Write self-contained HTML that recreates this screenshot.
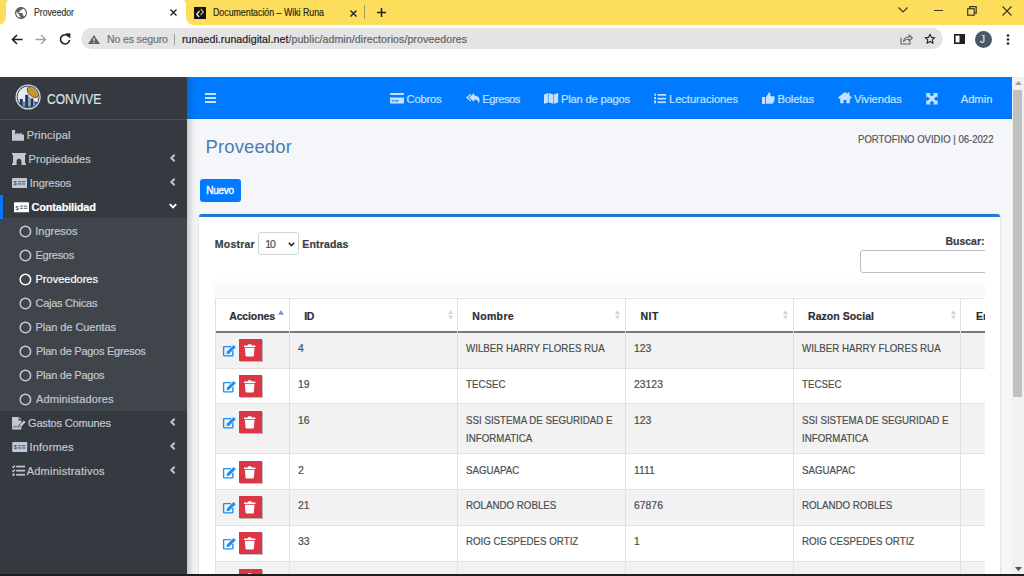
<!DOCTYPE html>
<html><head><meta charset="utf-8">
<style>
*{box-sizing:border-box;margin:0;padding:0}
html,body{width:1024px;height:576px;overflow:hidden;background:#fff;font-family:"Liberation Sans",sans-serif}
.a{position:absolute}
.t{position:absolute;white-space:nowrap;line-height:1;-webkit-text-stroke:0.2px currentColor}
svg{position:absolute;overflow:visible}
/* chrome */
#tabs{left:0;top:0;width:1024px;height:25px;background:#fddd5c}
#toolbar{left:0;top:25px;width:1024px;height:52px;background:#fff}
#omni{left:81px;top:28px;width:862px;height:21px;border-radius:11px;background:#e4e4e4}
/* page */
#sidebar{left:0;top:77px;width:187px;height:499px;background:#343a40}
#navbar{left:187px;top:77px;width:825px;height:42px;background:#007bff}
#content{left:187px;top:119px;width:825px;height:457px;background:#f4f6f9}
#scroll{left:1012px;top:77px;width:12px;height:499px;background:#f1f1f1}
.nav{color:#c2c7d0;font-size:11px}
.nb{color:#c4e0ff;font-size:11px}
</style></head>
<body>
<!-- ============ CHROME ============ -->
<div id="tabs" class="a"></div>
<div class="a" style="left:6px;top:-2px;width:180px;height:28px;background:#fff;border-radius:7px 7px 0 0"></div>
<div class="a" style="left:0;top:17px;width:6px;height:9px;background:#fff"></div>
<div class="a" style="left:-2px;top:15px;width:8px;height:10px;background:#fddd5c;border-radius:0 0 8px 0"></div>
<div class="a" style="left:186px;top:17px;width:6px;height:9px;background:#fff"></div>
<div class="a" style="left:186px;top:15px;width:8px;height:10px;background:#fddd5c;border-radius:0 0 0 8px"></div>
<!-- globe -->
<svg style="left:15px;top:6.5px" width="12" height="12" viewBox="2 2 20 20"><circle cx="12" cy="12" r="10" fill="#fff"/><path d="M12 2C6.48 2 2 6.48 2 12s4.48 10 10 10 10-4.48 10-10S17.52 2 12 2zm-1 17.930c-3.950-.49-7-3.850-7-7.930 0-.62.08-1.210.21-1.790L9 15v1c0 1.100.9 2 2 2v1.930zm6.900-2.540c-.26-.81-1-1.390-1.900-1.390h-1v-3c0-.55-.45-1-1-1H8v-2h2c.55 0 1-.45 1-1V7h2c1.100 0 2-.9 2-2v-.41c2.930 1.190 5 4.060 5 7.410 0 2.080-.8 3.970-2.100 5.390z" fill="#5f6368"/></svg>
<div class="t" style="transform:scaleX(0.8508);transform-origin:0 0;left:33.5px;top:8.2px;font-size:10.2px;color:#35373a">Proveedor</div>
<svg style="left:170px;top:9px" width="7" height="7" viewBox="0 0 7 7"><path d="M0.5 0.5L6.5 6.5M6.5 0.5L0.5 6.5" stroke="#202124" stroke-width="1.4"/></svg>
<!-- tab2 -->
<div class="a" style="left:194px;top:7px;width:12px;height:12px;background:#111"></div>
<svg style="left:194px;top:7px" width="12" height="12" viewBox="0 0 12 12"><path d="M5.5 4 L2.8 7.2 L5.2 10" stroke="#eee" stroke-width="1.3" fill="none"/><path d="M6.8 2 L9.2 5 L6.5 8" stroke="#c9a36a" stroke-width="1.3" fill="none"/></svg>
<div class="t" style="transform:scaleX(0.8635);transform-origin:0 0;left:212.5px;top:8.2px;font-size:10.2px;color:#2e2a18">Documentación – Wiki Runa</div>
<svg style="left:350px;top:10px" width="7" height="7" viewBox="0 0 7 7"><path d="M0.5 0.5L6.5 6.5M6.5 0.5L0.5 6.5" stroke="#202124" stroke-width="1.4"/></svg>
<div class="a" style="left:364px;top:5px;width:1px;height:14px;background:#a89a5a"></div>
<svg style="left:377px;top:8px" width="9" height="9" viewBox="0 0 9 9"><path d="M4.5 0V9M0 4.5H9" stroke="#202124" stroke-width="1.5"/></svg>
<!-- window controls -->
<svg style="left:898px;top:7px" width="10" height="6" viewBox="0 0 10 6"><path d="M0.5 0.5L5 5L9.5 0.5" stroke="#3c3a1e" stroke-width="1.2" fill="none"/></svg>
<div class="a" style="left:934px;top:10px;width:9px;height:1.3px;background:#3c3a1e"></div>
<svg style="left:967px;top:6px" width="10" height="10" viewBox="0 0 10 10"><rect x="0.7" y="2.7" width="6.5" height="6.5" fill="none" stroke="#3c3a1e" stroke-width="1.2"/><path d="M2.7 2.7V0.7H9.2V7.2H7.2" fill="none" stroke="#3c3a1e" stroke-width="1.2"/></svg>
<svg style="left:1002px;top:6px" width="10" height="10" viewBox="0 0 10 10"><path d="M0.5 0.5L9.5 9.5M9.5 0.5L0.5 9.5" stroke="#3c3a1e" stroke-width="1.2"/></svg>
<div id="toolbar" class="a" style="top:26px;height:51px"></div>
<div class="a" style="left:0;top:25px;width:6px;height:1px;background:#fff"></div>
<!-- nav buttons -->
<svg style="left:11px;top:34px" width="12" height="11" viewBox="0 0 12 11"><path d="M11.5 5.5H1.5M6 1L1.5 5.5L6 10" stroke="#202124" stroke-width="1.6" fill="none"/></svg>
<svg style="left:35px;top:34px" width="12" height="11" viewBox="0 0 12 11"><path d="M0.5 5.5H10.5M6 1L10.5 5.5L6 10" stroke="#a0a0a0" stroke-width="1.4" fill="none"/></svg>
<svg style="left:59px;top:33px" width="12" height="12" viewBox="0 0 12 12"><path d="M9.6 3.4A4.6 4.6 0 1 0 10.6 7" stroke="#202124" stroke-width="1.6" fill="none"/><path d="M7 0.8H11V4.8Z" fill="#202124" stroke="#202124" stroke-width="0.8"/></svg>
<div id="omni" class="a"></div>
<svg style="left:88px;top:35px" width="12" height="9" viewBox="0 0 12 9"><path d="M6 0L12 9H0Z" fill="#5f6368"/><path d="M6 3V6M6 7V8" stroke="#fff" stroke-width="1.1"/></svg>
<div class="t" style="letter-spacing:-0.183px;left:107px;top:34px;font-size:10.6px;color:#6f7276">No es seguro</div>
<div class="a" style="left:174px;top:34px;width:1px;height:11px;background:#9aa0a6"></div>
<div class="t" style="letter-spacing:0.069px;left:182px;top:34px;font-size:10.6px;color:#5f6368"><span style="color:#202124">runaedi.runadigital.net</span>/public/admin/directorios/proveedores</div>
<!-- right toolbar icons -->
<svg style="left:900px;top:33px" width="13" height="12" viewBox="0 0 13 12"><path d="M1 4.5V11H10V8.5" stroke="#5f6368" stroke-width="1.1" fill="none"/><path d="M3.5 8.5C4 5.5 6 4 9 4V2L12.3 5L9 8V6C6.5 6 5 6.8 3.5 8.5Z" stroke="#5f6368" stroke-width="1.1" fill="none" stroke-linejoin="round"/></svg>
<svg style="left:924px;top:33px" width="12" height="12" viewBox="0 0 24 24"><path d="M12 2.5L14.9 8.8L21.6 9.4L16.5 13.8L18.1 20.6L12 17L5.9 20.6L7.5 13.8L2.4 9.4L9.1 8.8Z" stroke="#202124" stroke-width="2.2" fill="none" stroke-linejoin="round"/></svg>
<svg style="left:954px;top:34px" width="11" height="10" viewBox="0 0 11 10"><rect x="0.8" y="0.8" width="9.4" height="8.4" fill="none" stroke="#202124" stroke-width="1.6"/><rect x="5.5" y="0.8" width="4.7" height="8.4" fill="#202124"/></svg>
<div class="a" style="left:975px;top:31px;width:17px;height:17px;border-radius:50%;background:#475a63"></div>
<div class="t" style="left:980px;top:35px;font-size:10px;color:#dfe8ee">J</div>
<svg style="left:1006px;top:34px" width="4" height="12" viewBox="0 0 4 12"><circle cx="2" cy="1.5" r="1.3" fill="#202124"/><circle cx="2" cy="5.5" r="1.3" fill="#202124"/><circle cx="2" cy="9.5" r="1.3" fill="#202124"/></svg>

<!-- ============ PAGE ============ -->
<div id="sidebar" class="a"></div>
<div class="a" style="left:0;top:119px;width:187px;height:1px;background:#4b545c"></div>
<div class="a" style="left:0;top:218px;width:187px;height:193px;background:#3f454b"></div>
<div class="a" style="left:0;top:195px;width:2.5px;height:24px;background:#007bff"></div>
<svg style="left:15px;top:84px" width="26" height="26" viewBox="0 0 26 26"><circle cx="13.1" cy="13" r="12.6" fill="#d9dee4"/><circle cx="13.1" cy="13" r="11.3" fill="#2e3b55"/><circle cx="13.1" cy="13" r="10.5" fill="#e6eaf1"/><clipPath id="lc"><circle cx="13.1" cy="13" r="10.5"/></clipPath><g clip-path="url(#lc)"><ellipse cx="18" cy="8" rx="6.8" ry="4.2" transform="rotate(42 18 8)" fill="#c9952b" stroke="#3d3a2c" stroke-width="0.7"/><path d="M14 26L28 10V26Z" fill="#e6eaf1" opacity="0"/><rect x="4.8" y="15" width="3" height="11" fill="#23365e"/><rect x="7.8" y="17.5" width="2.2" height="9" fill="#6a8db5"/><rect x="10.2" y="10.8" width="3.2" height="16" fill="#23365e"/><rect x="13.4" y="13" width="2" height="13" fill="#7fa2c8"/><rect x="15.6" y="14.5" width="2.8" height="12" fill="#23365e"/><rect x="18.4" y="17" width="2" height="9" fill="#6a8db5"/><rect x="20.2" y="18" width="2.6" height="9" fill="#23365e"/><rect x="0" y="22.5" width="26" height="4" fill="#23365e"/></g></svg>
<div class="t" style="transform:scaleX(0.8028);transform-origin:0 0;left:47px;top:91.30px;font-size:15px;color:#dfe2e6">CONVIVE</div>
<div class="t" style="letter-spacing:0.202px;left:26.7px;top:130.29px;font-size:11px;color:#c2c7d0;font-weight:400">Principal</div>
<div class="t" style="letter-spacing:0.042px;left:28.6px;top:154.29px;font-size:11px;color:#c2c7d0;font-weight:400">Propiedades</div>
<div class="t" style="letter-spacing:-0.072px;left:29.7px;top:178.29px;font-size:11px;color:#c2c7d0;font-weight:400">Ingresos</div>
<div class="t" style="letter-spacing:-0.192px;left:31.5px;top:202.29px;font-size:11px;color:#ffffff;font-weight:700">Contabilidad</div>
<div class="t" style="letter-spacing:-0.000px;left:35.3px;top:226.29px;font-size:11px;color:#c2c7d0;font-weight:400">Ingresos</div>
<div class="t" style="letter-spacing:-0.277px;left:35.5px;top:250.29px;font-size:11px;color:#c2c7d0;font-weight:400">Egresos</div>
<div class="t" style="letter-spacing:0.013px;left:35.5px;top:274.29px;font-size:11px;color:#ffffff;font-weight:400">Proveedores</div>
<div class="t" style="letter-spacing:-0.265px;left:35.5px;top:298.29px;font-size:11px;color:#c2c7d0;font-weight:400">Cajas Chicas</div>
<div class="t" style="letter-spacing:-0.060px;left:35.5px;top:322.29px;font-size:11px;color:#c2c7d0;font-weight:400">Plan de Cuentas</div>
<div class="t" style="letter-spacing:-0.258px;left:36px;top:346.29px;font-size:11px;color:#c2c7d0;font-weight:400">Plan de Pagos Egresos</div>
<div class="t" style="letter-spacing:-0.255px;left:36px;top:370.29px;font-size:11px;color:#c2c7d0;font-weight:400">Plan de Pagos</div>
<div class="t" style="letter-spacing:0.129px;left:36px;top:394.29px;font-size:11px;color:#c2c7d0;font-weight:400">Administadores</div>
<div class="t" style="letter-spacing:-0.153px;left:28px;top:418.29px;font-size:11px;color:#c2c7d0;font-weight:400">Gastos Comunes</div>
<div class="t" style="letter-spacing:0.172px;left:29.6px;top:442.29px;font-size:11px;color:#c2c7d0;font-weight:400">Informes</div>
<div class="t" style="letter-spacing:0.230px;left:26.7px;top:466.29px;font-size:11px;color:#c2c7d0;font-weight:400">Administrativos</div>
<svg style="left:12px;top:129.6px" width="12" height="10.8" viewBox="0 0 12 10.8"><path d="M0 10.8V0H3.2V4.6L6.4 2.4V4.6L9.6 2.4V4.6H12V10.8Z" fill="#c2c7d0"/></svg>
<svg style="left:12px;top:153px" width="14" height="12" viewBox="0 0 14 12"><path d="M0 0H14V1.8H13V10.2H14V12H9.4V8.4A2.4 2.6 0 0 0 4.6 8.4V12H0V10.2H1V1.8H0Z" fill="#c2c7d0"/></svg>
<svg style="left:12px;top:178px" width="15" height="10" viewBox="0 0 15 10"><rect x="0" y="0" width="15" height="10" rx="0.6" fill="#c2c7d0"/><text x="1.5" y="7.3" font-size="6" font-family="Liberation Sans" fill="#343a40">$</text><rect x="6" y="3.4" width="3" height="0.8" fill="#343a40"/><rect x="9.8" y="3.4" width="3.4" height="0.8" fill="#343a40"/><rect x="6" y="5.6" width="3" height="0.8" fill="#343a40"/><rect x="9.8" y="5.6" width="3.4" height="0.8" fill="#343a40"/></svg>
<svg style="left:14px;top:201.5px" width="15" height="10.5" viewBox="0 0 15 10"><rect x="0" y="0" width="15" height="10" rx="0.6" fill="#ffffff"/><text x="1.5" y="7.3" font-size="6" font-family="Liberation Sans" fill="#343a40">$</text><rect x="6" y="3.4" width="3" height="0.8" fill="#343a40"/><rect x="9.8" y="3.4" width="3.4" height="0.8" fill="#343a40"/><rect x="6" y="5.6" width="3" height="0.8" fill="#343a40"/><rect x="9.8" y="5.6" width="3.4" height="0.8" fill="#343a40"/></svg>
<svg style="left:11.7px;top:441.5px" width="15.5" height="10" viewBox="0 0 15 10"><rect x="0" y="0" width="15" height="10" rx="0.6" fill="#c2c7d0"/><text x="1.5" y="7.3" font-size="6" font-family="Liberation Sans" fill="#343a40">$</text><rect x="6" y="3.4" width="3" height="0.8" fill="#343a40"/><rect x="9.8" y="3.4" width="3.4" height="0.8" fill="#343a40"/><rect x="6" y="5.6" width="3" height="0.8" fill="#343a40"/><rect x="9.8" y="5.6" width="3.4" height="0.8" fill="#343a40"/></svg>
<svg style="left:19px;top:225.5px" width="12" height="12" viewBox="0 0 12 12"><circle cx="6.4" cy="5.6" r="5.25" fill="none" stroke="#c2c7d0" stroke-width="1.5"/></svg>
<svg style="left:19px;top:249.5px" width="12" height="12" viewBox="0 0 12 12"><circle cx="6.4" cy="5.6" r="5.25" fill="none" stroke="#c2c7d0" stroke-width="1.5"/></svg>
<svg style="left:19px;top:273.5px" width="12" height="12" viewBox="0 0 12 12"><circle cx="6.4" cy="5.6" r="5.25" fill="none" stroke="#ffffff" stroke-width="1.5"/></svg>
<svg style="left:19px;top:297.5px" width="12" height="12" viewBox="0 0 12 12"><circle cx="6.4" cy="5.6" r="5.25" fill="none" stroke="#c2c7d0" stroke-width="1.5"/></svg>
<svg style="left:19px;top:321.5px" width="12" height="12" viewBox="0 0 12 12"><circle cx="6.4" cy="5.6" r="5.25" fill="none" stroke="#c2c7d0" stroke-width="1.5"/></svg>
<svg style="left:19px;top:345.5px" width="12" height="12" viewBox="0 0 12 12"><circle cx="6.4" cy="5.6" r="5.25" fill="none" stroke="#c2c7d0" stroke-width="1.5"/></svg>
<svg style="left:19px;top:369.5px" width="12" height="12" viewBox="0 0 12 12"><circle cx="6.4" cy="5.6" r="5.25" fill="none" stroke="#c2c7d0" stroke-width="1.5"/></svg>
<svg style="left:19px;top:393.5px" width="12" height="12" viewBox="0 0 12 12"><circle cx="6.4" cy="5.6" r="5.25" fill="none" stroke="#c2c7d0" stroke-width="1.5"/></svg>
<svg style="left:11.8px;top:416.8px" width="14" height="12.4" viewBox="0 0 14 12.4"><path d="M0 0H6.6V3.4H9.4V5.4L6.6 8.3L6 10.6L8.4 10L9.4 9V12.4H0Z" fill="#c2c7d0"/><path d="M7.3 0L9.4 2.3H7.3Z" fill="#c2c7d0"/><path d="M7.1 9.9L7.6 7.9L11.9 3.5L13.6 5.2L9.3 9.5Z" fill="#c2c7d0"/><path d="M1.3 10.6Q2.4 8.2 3.4 9.8Q4.3 8.8 5.4 9.9" stroke="#343a40" stroke-width="0.9" fill="none"/></svg>
<svg style="left:11.7px;top:465px" width="13" height="11.5" viewBox="0 0 13 11.5"><path d="M0.4 1.5L1.3 2.5L3 0.5M0.4 5.6L1.3 6.6L3 4.6" stroke="#c2c7d0" stroke-width="1.3" fill="none"/><circle cx="1.5" cy="9.8" r="1.2" fill="#c2c7d0"/><rect x="4.2" y="0.7" width="8.8" height="1.7" fill="#c2c7d0"/><rect x="4.2" y="4.8" width="8.8" height="1.7" fill="#c2c7d0"/><rect x="4.2" y="8.9" width="8.8" height="1.7" fill="#c2c7d0"/></svg>
<svg style="left:170px;top:154.4px" width="6" height="8" viewBox="0 0 6 8"><path d="M4.6 0.8L1.3 4L4.6 7.2" stroke="#c2c7d0" stroke-width="1.9" fill="none"/></svg>
<svg style="left:170px;top:178.4px" width="6" height="8" viewBox="0 0 6 8"><path d="M4.6 0.8L1.3 4L4.6 7.2" stroke="#c2c7d0" stroke-width="1.9" fill="none"/></svg>
<svg style="left:170px;top:418.4px" width="6" height="8" viewBox="0 0 6 8"><path d="M4.6 0.8L1.3 4L4.6 7.2" stroke="#c2c7d0" stroke-width="1.9" fill="none"/></svg>
<svg style="left:170px;top:442.4px" width="6" height="8" viewBox="0 0 6 8"><path d="M4.6 0.8L1.3 4L4.6 7.2" stroke="#c2c7d0" stroke-width="1.9" fill="none"/></svg>
<svg style="left:170px;top:466.4px" width="6" height="8" viewBox="0 0 6 8"><path d="M4.6 0.8L1.3 4L4.6 7.2" stroke="#c2c7d0" stroke-width="1.9" fill="none"/></svg>
<svg style="left:168.5px;top:203px" width="8" height="6" viewBox="0 0 8 6"><path d="M0.8 1.2L4 4.5L7.2 1.2" stroke="#fff" stroke-width="1.9" fill="none"/></svg>
<div id="navbar" class="a"></div>
<div class="a" style="left:187px;top:77px;width:10px;height:42px;background:linear-gradient(90deg,rgba(0,0,0,.12),rgba(0,0,0,0))"></div>
<div class="a" style="left:187px;top:118px;width:825px;height:1px;background:rgba(0,0,0,.07)"></div>
<svg style="left:205px;top:92.6px" width="11" height="10" viewBox="0 0 11 10"><rect y="0" width="11" height="2" fill="#c6e1ff"/><rect y="4" width="11" height="2" fill="#c6e1ff"/><rect y="8" width="11" height="2" fill="#c6e1ff"/></svg>
<div class="t" style="letter-spacing:-0.196px;left:406.6px;top:93.52px;font-size:11.2px;color:#c6e1ff">Cobros</div>
<div class="t" style="letter-spacing:-0.508px;left:482.3px;top:93.52px;font-size:11.2px;color:#c6e1ff">Egresos</div>
<div class="t" style="letter-spacing:-0.196px;left:561px;top:93.52px;font-size:11.2px;color:#c6e1ff">Plan de pagos</div>
<div class="t" style="letter-spacing:-0.055px;left:669px;top:93.52px;font-size:11.2px;color:#c6e1ff">Lecturaciones</div>
<div class="t" style="letter-spacing:-0.121px;left:777.4px;top:93.52px;font-size:11.2px;color:#c6e1ff">Boletas</div>
<div class="t" style="letter-spacing:-0.064px;left:854px;top:93.52px;font-size:11.2px;color:#c6e1ff">Viviendas</div>
<div class="t" style="letter-spacing:-0.005px;left:960.7px;top:93.52px;font-size:11.2px;color:#c6e1ff">Admin</div>
<svg style="left:390px;top:92.8px" width="14" height="10.6" viewBox="0 0 14 10.6"><path d="M0 1.2Q0 0 1.2 0H12.8Q14 0 14 1.2V2H0Z" fill="#c6e1ff"/><path d="M0 4.4H14V9.4Q14 10.6 12.8 10.6H1.2Q0 10.6 0 9.4Z" fill="#c6e1ff"/><rect x="1.8" y="7.2" width="2.4" height="1.2" fill="#007bff"/><rect x="5" y="7.2" width="3.6" height="1.2" fill="#007bff"/></svg>
<svg style="left:466px;top:92.7px" width="14" height="10.6" viewBox="0 0 14 10.6"><path d="M4.8 0.6L0 4.6L4.8 8.8V7.1L1.9 4.6L4.8 2.3Z" fill="#c6e1ff"/><path d="M8.2 0L3.2 4.6L8.2 9V6.6C10.6 6.6 12.4 7.6 12.6 10.5C14.8 7.2 13.8 2.6 8.2 2.4Z" fill="#c6e1ff"/></svg>
<svg style="left:544.3px;top:92.8px" width="14.2" height="10.8" viewBox="0 0 14.2 10.8"><path d="M0 1.4L4.4 0.1V9.4L0 10.8Z" fill="#c6e1ff"/><path d="M4.9 0L9.3 1.4V10.8L4.9 9.4Z" fill="#c6e1ff"/><path d="M9.8 1.4L14.2 0V9.4L9.8 10.8Z" fill="#c6e1ff"/></svg>
<svg style="left:654.3px;top:92.8px" width="12" height="11" viewBox="0 0 12 11"><rect x="0.4" y="0.4" width="1.4" height="2.6" fill="#c6e1ff"/><rect x="0.2" y="4" width="1.8" height="2.2" fill="#c6e1ff"/><rect x="0.2" y="7.4" width="1.8" height="3" fill="#c6e1ff"/><rect x="3.5" y="1.0" width="8.6" height="1.7" fill="#c6e1ff"/><rect x="3.5" y="4.8" width="8.6" height="1.7" fill="#c6e1ff"/><rect x="3.5" y="8.4" width="8.6" height="1.7" fill="#c6e1ff"/></svg>
<svg style="left:762.2px;top:92px" width="13" height="12" viewBox="0 0 13 12"><rect x="0" y="5" width="3" height="7" fill="#c6e1ff"/><path d="M3.8 5.2L6.4 1.6Q6.8 0 7.8 0.4Q9 1 8.2 4.2H11.8Q13 4.4 12.8 5.6L12.4 6.6Q13 7.4 12.2 8.2Q12.6 9.2 11.6 9.8Q11.8 11.2 10.4 11.8H3.8Z" fill="#c6e1ff"/></svg>
<svg style="left:838.3px;top:92.4px" width="14" height="11.2" viewBox="0 0 14 11.2"><path d="M7 0L0 5.6L1 6.8L2.2 5.9V11.2H5.6V8H8.4V11.2H11.8V5.9L13 6.8L14 5.6L11.4 3.5V0.6H9.6V2.1Z" fill="#c6e1ff"/></svg>
<svg style="left:925.6px;top:92.6px" width="11.8" height="11.4" viewBox="0 0 12 12"><path d="M0 0H5L3.6 1.4L6 3.8L8.4 1.4L7 0H12V5L10.6 3.6L8.2 6L10.6 8.4L12 7V12H7L8.4 10.6L6 8.2L3.6 10.6L5 12H0V7L1.4 8.4L3.8 6L1.4 3.6L0 5Z" fill="#c6e1ff"/></svg>
<div id="content" class="a"></div>
<div class="a" style="left:187px;top:119px;width:10px;height:457px;background:linear-gradient(90deg,rgba(0,0,0,.17),rgba(0,0,0,.04) 60%,rgba(0,0,0,0))"></div>
<div class="t" style="letter-spacing:0.118px;left:205.5px;top:137.64px;font-size:18.5px;color:#4c7eac;-webkit-text-stroke:0">Proveedor</div>
<div class="t" style="transform:scaleX(0.8779);transform-origin:0 0;left:858px;top:134.15px;font-size:10.9px;color:#555">PORTOFINO OVIDIO | 06-2022</div>
<div class="a" style="left:199.5px;top:179.3px;width:41px;height:22.7px;background:#007bff;border-radius:3px"></div>
<div class="t" style="letter-spacing:-0.277px;left:206.2px;top:185.94px;font-size:10px;color:#fff;font-weight:400;-webkit-text-stroke:0.35px #fff">Nuevo</div>
<div class="a" style="left:199px;top:214px;width:801px;height:380px;background:#fff;border-top:3px solid #1f78d1;border-radius:3px;box-shadow:0 0 1px rgba(0,0,0,.2),0 1px 3px rgba(0,0,0,.15)"></div>
<div class="t" style="letter-spacing:0.231px;left:214.8px;top:239.21px;font-size:10.5px;color:#3a3d40;font-weight:700">Mostrar</div>
<div class="a" style="left:257.5px;top:232px;width:41px;height:23px;border:1px solid #ced4da;border-radius:3px;background:#fff"></div>
<div class="t" style="letter-spacing:-1.188px;left:265.3px;top:239.21px;font-size:10.5px;color:#495057">10</div>
<svg style="left:288px;top:242px" width="7" height="5" viewBox="0 0 7 5"><path d="M0.8 0.8L3.5 3.6L6.2 0.8" stroke="#222" stroke-width="1.5" fill="none"/></svg>
<div class="t" style="letter-spacing:0.166px;left:302.3px;top:239.21px;font-size:10.5px;color:#3a3d40;font-weight:700">Entradas</div>
<div class="t" style="letter-spacing:-0.018px;left:945.5px;top:236.41px;font-size:10.5px;color:#3a3d40;font-weight:700">Buscar:</div>
<div class="a" style="left:200px;top:217px;width:785px;height:359px;overflow:hidden">
<div class="a" style="left:659.5px;top:33px;width:140px;height:22.7px;border:1px solid #bcc0c4;border-radius:3px;background:#fff"></div>
<div class="a" style="left:14px;top:58px;width:771px;height:22px;background:linear-gradient(180deg,rgba(0,0,0,0),rgba(0,0,0,.03))"></div>
<div class="a" style="left:15px;top:116px;width:915px;height:35px;background:#f2f2f2"></div>
<div class="a" style="left:15px;top:151px;width:915px;height:35px;background:#fff"></div>
<div class="a" style="left:15px;top:186px;width:915px;height:50px;background:#f2f2f2"></div>
<div class="a" style="left:15px;top:236px;width:915px;height:36px;background:#fff"></div>
<div class="a" style="left:15px;top:272px;width:915px;height:36px;background:#f2f2f2"></div>
<div class="a" style="left:15px;top:308px;width:915px;height:36px;background:#fff"></div>
<div class="a" style="left:15px;top:344px;width:915px;height:36px;background:#f2f2f2"></div>
<div class="a" style="left:15px;top:81px;width:915px;height:35px;background:#fff"></div>
<div class="a" style="left:15px;top:80.5px;width:915px;height:1px;background:#e3e6e9"></div>
<div class="a" style="left:15px;top:114px;width:915px;height:2px;background:#76797c"></div>
<div class="a" style="left:15px;top:150.5px;width:915px;height:1px;background:#e1e1e1"></div>
<div class="a" style="left:15px;top:185.5px;width:915px;height:1px;background:#e1e1e1"></div>
<div class="a" style="left:15px;top:235.5px;width:915px;height:1px;background:#e1e1e1"></div>
<div class="a" style="left:15px;top:271.5px;width:915px;height:1px;background:#e1e1e1"></div>
<div class="a" style="left:15px;top:307.5px;width:915px;height:1px;background:#e1e1e1"></div>
<div class="a" style="left:15px;top:343.5px;width:915px;height:1px;background:#e1e1e1"></div>
<div class="a" style="left:14.5px;top:81px;width:1px;height:400px;background:#e1e1e1"></div>
<div class="a" style="left:88.89999999999998px;top:81px;width:1px;height:400px;background:#e1e1e1"></div>
<div class="a" style="left:257.2px;top:81px;width:1px;height:400px;background:#e1e1e1"></div>
<div class="a" style="left:424.70000000000005px;top:81px;width:1px;height:400px;background:#e1e1e1"></div>
<div class="a" style="left:592.8px;top:81px;width:1px;height:400px;background:#e1e1e1"></div>
<div class="a" style="left:760.4px;top:81px;width:1px;height:400px;background:#e1e1e1"></div>
<div class="t" style="letter-spacing:-0.127px;left:29.19999999999999px;top:93.51px;font-size:10.5px;color:#2b2e31;font-weight:700">Acciones</div>
<div class="t" style="letter-spacing:-0.300px;left:104.19999999999999px;top:93.51px;font-size:10.5px;color:#2b2e31;font-weight:700">ID</div>
<div class="t" style="letter-spacing:0.362px;left:272.2px;top:93.51px;font-size:10.5px;color:#2b2e31;font-weight:700">Nombre</div>
<div class="t" style="letter-spacing:0.539px;left:440.5px;top:93.51px;font-size:10.5px;color:#2b2e31;font-weight:700">NIT</div>
<div class="t" style="letter-spacing:0.058px;left:608px;top:93.51px;font-size:10.5px;color:#2b2e31;font-weight:700">Razon Social</div>
<div class="t" style="left:776px;top:93.51px;font-size:10.5px;color:#2b2e31;font-weight:700">Email</div>
<svg style="left:78.39999999999998px;top:92.5px" width="6" height="5" viewBox="0 0 6 5"><path d="M3 0L6 4.8H0Z" fill="#8f8bd6"/></svg>
<svg style="left:247.5px;top:93px" width="5" height="9.5" viewBox="0 0 5 9.5"><path d="M2.5 0L5 4H0Z M2.5 9.5L5 5.5H0Z" fill="#d3d6d9"/></svg>
<svg style="left:415px;top:93px" width="5" height="9.5" viewBox="0 0 5 9.5"><path d="M2.5 0L5 4H0Z M2.5 9.5L5 5.5H0Z" fill="#d3d6d9"/></svg>
<svg style="left:583px;top:93px" width="5" height="9.5" viewBox="0 0 5 9.5"><path d="M2.5 0L5 4H0Z M2.5 9.5L5 5.5H0Z" fill="#d3d6d9"/></svg>
<svg style="left:750.8px;top:93px" width="5" height="9.5" viewBox="0 0 5 9.5"><path d="M2.5 0L5 4H0Z M2.5 9.5L5 5.5H0Z" fill="#d3d6d9"/></svg>
<svg style="left:23px;top:127.70px" width="13.3" height="11.5" viewBox="0 0 13.3 11.5"><path d="M8 1.6H1.2Q0.6 1.6 0.6 2.2V10.3Q0.6 10.9 1.2 10.9H9.3Q9.9 10.9 9.9 10.3V6" stroke="#1f8ff0" stroke-width="1.4" fill="none"/><path d="M4 6.6L10.6 0L12.8 2.2L6.2 8.8L3.6 9.2Z" fill="#1f8ff0"/></svg>
<div class="a" style="left:39px;top:122.00px;width:22.6px;height:21.8px;background:#dc3545;box-shadow:1px 1px 0 rgba(0,0,0,.25)"></div>
<svg style="left:44.400000000000006px;top:126.80px" width="11.4" height="12.4" viewBox="0 0 11.4 12.4"><path d="M0 1.4H3.6L4.2 0.3H7.2L7.8 1.4H11.4V3H0Z" fill="#fff"/><path d="M0.9 3.8H10.5L9.9 11.6Q9.8 12.4 9 12.4H2.4Q1.6 12.4 1.5 11.6Z" fill="#fff"/></svg>
<div class="t" style="left:98.00px;top:125.92px;font-size:11.2px;color:#4a4d50;transform:scaleX(0.93);transform-origin:0 0">4</div>
<div class="t" style="left:265.80px;top:125.92px;font-size:11.2px;color:#4a4d50;transform:scaleX(0.87);transform-origin:0 0">WILBER HARRY FLORES RUA</div>
<div class="t" style="left:433.80px;top:125.92px;font-size:11.2px;color:#4a4d50;transform:scaleX(0.93);transform-origin:0 0">123</div>
<div class="t" style="left:601.50px;top:125.92px;font-size:11.2px;color:#4a4d50;transform:scaleX(0.87);transform-origin:0 0">WILBER HARRY FLORES RUA</div>
<svg style="left:23px;top:164.10px" width="13.3" height="11.5" viewBox="0 0 13.3 11.5"><path d="M8 1.6H1.2Q0.6 1.6 0.6 2.2V10.3Q0.6 10.9 1.2 10.9H9.3Q9.9 10.9 9.9 10.3V6" stroke="#1f8ff0" stroke-width="1.4" fill="none"/><path d="M4 6.6L10.6 0L12.8 2.2L6.2 8.8L3.6 9.2Z" fill="#1f8ff0"/></svg>
<div class="a" style="left:39px;top:158.40px;width:22.6px;height:21.8px;background:#dc3545;box-shadow:1px 1px 0 rgba(0,0,0,.25)"></div>
<svg style="left:44.400000000000006px;top:163.20px" width="11.4" height="12.4" viewBox="0 0 11.4 12.4"><path d="M0 1.4H3.6L4.2 0.3H7.2L7.8 1.4H11.4V3H0Z" fill="#fff"/><path d="M0.9 3.8H10.5L9.9 11.6Q9.8 12.4 9 12.4H2.4Q1.6 12.4 1.5 11.6Z" fill="#fff"/></svg>
<div class="t" style="left:98.00px;top:162.32px;font-size:11.2px;color:#4a4d50;transform:scaleX(0.93);transform-origin:0 0">19</div>
<div class="t" style="left:265.80px;top:162.32px;font-size:11.2px;color:#4a4d50;transform:scaleX(0.87);transform-origin:0 0">TECSEC</div>
<div class="t" style="left:433.80px;top:162.32px;font-size:11.2px;color:#4a4d50;transform:scaleX(0.93);transform-origin:0 0">23123</div>
<div class="t" style="left:601.50px;top:162.32px;font-size:11.2px;color:#4a4d50;transform:scaleX(0.87);transform-origin:0 0">TECSEC</div>
<svg style="left:23px;top:199.70px" width="13.3" height="11.5" viewBox="0 0 13.3 11.5"><path d="M8 1.6H1.2Q0.6 1.6 0.6 2.2V10.3Q0.6 10.9 1.2 10.9H9.3Q9.9 10.9 9.9 10.3V6" stroke="#1f8ff0" stroke-width="1.4" fill="none"/><path d="M4 6.6L10.6 0L12.8 2.2L6.2 8.8L3.6 9.2Z" fill="#1f8ff0"/></svg>
<div class="a" style="left:39px;top:194.00px;width:22.6px;height:21.8px;background:#dc3545;box-shadow:1px 1px 0 rgba(0,0,0,.25)"></div>
<svg style="left:44.400000000000006px;top:198.80px" width="11.4" height="12.4" viewBox="0 0 11.4 12.4"><path d="M0 1.4H3.6L4.2 0.3H7.2L7.8 1.4H11.4V3H0Z" fill="#fff"/><path d="M0.9 3.8H10.5L9.9 11.6Q9.8 12.4 9 12.4H2.4Q1.6 12.4 1.5 11.6Z" fill="#fff"/></svg>
<div class="t" style="left:98.00px;top:197.92px;font-size:11.2px;color:#4a4d50;transform:scaleX(0.93);transform-origin:0 0">16</div>
<div class="t" style="left:265.80px;top:197.92px;font-size:11.2px;color:#4a4d50;transform:scaleX(0.87);transform-origin:0 0">SSI SISTEMA DE SEGURIDAD E</div>
<div class="t" style="left:265.80px;top:215.92px;font-size:11.2px;color:#4a4d50;transform:scaleX(0.87);transform-origin:0 0">INFORMATICA</div>
<div class="t" style="left:433.80px;top:197.92px;font-size:11.2px;color:#4a4d50;transform:scaleX(0.93);transform-origin:0 0">123</div>
<div class="t" style="left:601.50px;top:197.92px;font-size:11.2px;color:#4a4d50;transform:scaleX(0.87);transform-origin:0 0">SSI SISTEMA DE SEGURIDAD E</div>
<div class="t" style="left:601.50px;top:215.92px;font-size:11.2px;color:#4a4d50;transform:scaleX(0.87);transform-origin:0 0">INFORMATICA</div>
<svg style="left:23px;top:249.80px" width="13.3" height="11.5" viewBox="0 0 13.3 11.5"><path d="M8 1.6H1.2Q0.6 1.6 0.6 2.2V10.3Q0.6 10.9 1.2 10.9H9.3Q9.9 10.9 9.9 10.3V6" stroke="#1f8ff0" stroke-width="1.4" fill="none"/><path d="M4 6.6L10.6 0L12.8 2.2L6.2 8.8L3.6 9.2Z" fill="#1f8ff0"/></svg>
<div class="a" style="left:39px;top:244.10px;width:22.6px;height:21.8px;background:#dc3545;box-shadow:1px 1px 0 rgba(0,0,0,.25)"></div>
<svg style="left:44.400000000000006px;top:248.90px" width="11.4" height="12.4" viewBox="0 0 11.4 12.4"><path d="M0 1.4H3.6L4.2 0.3H7.2L7.8 1.4H11.4V3H0Z" fill="#fff"/><path d="M0.9 3.8H10.5L9.9 11.6Q9.8 12.4 9 12.4H2.4Q1.6 12.4 1.5 11.6Z" fill="#fff"/></svg>
<div class="t" style="left:98.00px;top:248.02px;font-size:11.2px;color:#4a4d50;transform:scaleX(0.93);transform-origin:0 0">2</div>
<div class="t" style="left:265.80px;top:248.02px;font-size:11.2px;color:#4a4d50;transform:scaleX(0.87);transform-origin:0 0">SAGUAPAC</div>
<div class="t" style="left:433.80px;top:248.02px;font-size:11.2px;color:#4a4d50;transform:scaleX(0.93);transform-origin:0 0">1111</div>
<div class="t" style="left:601.50px;top:248.02px;font-size:11.2px;color:#4a4d50;transform:scaleX(0.87);transform-origin:0 0">SAGUAPAC</div>
<svg style="left:23px;top:284.90px" width="13.3" height="11.5" viewBox="0 0 13.3 11.5"><path d="M8 1.6H1.2Q0.6 1.6 0.6 2.2V10.3Q0.6 10.9 1.2 10.9H9.3Q9.9 10.9 9.9 10.3V6" stroke="#1f8ff0" stroke-width="1.4" fill="none"/><path d="M4 6.6L10.6 0L12.8 2.2L6.2 8.8L3.6 9.2Z" fill="#1f8ff0"/></svg>
<div class="a" style="left:39px;top:279.20px;width:22.6px;height:21.8px;background:#dc3545;box-shadow:1px 1px 0 rgba(0,0,0,.25)"></div>
<svg style="left:44.400000000000006px;top:284.00px" width="11.4" height="12.4" viewBox="0 0 11.4 12.4"><path d="M0 1.4H3.6L4.2 0.3H7.2L7.8 1.4H11.4V3H0Z" fill="#fff"/><path d="M0.9 3.8H10.5L9.9 11.6Q9.8 12.4 9 12.4H2.4Q1.6 12.4 1.5 11.6Z" fill="#fff"/></svg>
<div class="t" style="left:98.00px;top:283.12px;font-size:11.2px;color:#4a4d50;transform:scaleX(0.93);transform-origin:0 0">21</div>
<div class="t" style="left:265.80px;top:283.12px;font-size:11.2px;color:#4a4d50;transform:scaleX(0.87);transform-origin:0 0">ROLANDO ROBLES</div>
<div class="t" style="left:433.80px;top:283.12px;font-size:11.2px;color:#4a4d50;transform:scaleX(0.93);transform-origin:0 0">67876</div>
<div class="t" style="left:601.50px;top:283.12px;font-size:11.2px;color:#4a4d50;transform:scaleX(0.87);transform-origin:0 0">ROLANDO ROBLES</div>
<svg style="left:23px;top:321.10px" width="13.3" height="11.5" viewBox="0 0 13.3 11.5"><path d="M8 1.6H1.2Q0.6 1.6 0.6 2.2V10.3Q0.6 10.9 1.2 10.9H9.3Q9.9 10.9 9.9 10.3V6" stroke="#1f8ff0" stroke-width="1.4" fill="none"/><path d="M4 6.6L10.6 0L12.8 2.2L6.2 8.8L3.6 9.2Z" fill="#1f8ff0"/></svg>
<div class="a" style="left:39px;top:315.40px;width:22.6px;height:21.8px;background:#dc3545;box-shadow:1px 1px 0 rgba(0,0,0,.25)"></div>
<svg style="left:44.400000000000006px;top:320.20px" width="11.4" height="12.4" viewBox="0 0 11.4 12.4"><path d="M0 1.4H3.6L4.2 0.3H7.2L7.8 1.4H11.4V3H0Z" fill="#fff"/><path d="M0.9 3.8H10.5L9.9 11.6Q9.8 12.4 9 12.4H2.4Q1.6 12.4 1.5 11.6Z" fill="#fff"/></svg>
<div class="t" style="left:98.00px;top:319.32px;font-size:11.2px;color:#4a4d50;transform:scaleX(0.93);transform-origin:0 0">33</div>
<div class="t" style="left:265.80px;top:319.32px;font-size:11.2px;color:#4a4d50;transform:scaleX(0.87);transform-origin:0 0">ROIG CESPEDES ORTIZ</div>
<div class="t" style="left:433.80px;top:319.32px;font-size:11.2px;color:#4a4d50;transform:scaleX(0.93);transform-origin:0 0">1</div>
<div class="t" style="left:601.50px;top:319.32px;font-size:11.2px;color:#4a4d50;transform:scaleX(0.87);transform-origin:0 0">ROIG CESPEDES ORTIZ</div>
<svg style="left:23px;top:357.30px" width="13.3" height="11.5" viewBox="0 0 13.3 11.5"><path d="M8 1.6H1.2Q0.6 1.6 0.6 2.2V10.3Q0.6 10.9 1.2 10.9H9.3Q9.9 10.9 9.9 10.3V6" stroke="#1f8ff0" stroke-width="1.4" fill="none"/><path d="M4 6.6L10.6 0L12.8 2.2L6.2 8.8L3.6 9.2Z" fill="#1f8ff0"/></svg>
<div class="a" style="left:39px;top:351.60px;width:22.6px;height:21.8px;background:#dc3545;box-shadow:1px 1px 0 rgba(0,0,0,.25)"></div>
<svg style="left:44.400000000000006px;top:356.40px" width="11.4" height="12.4" viewBox="0 0 11.4 12.4"><path d="M0 1.4H3.6L4.2 0.3H7.2L7.8 1.4H11.4V3H0Z" fill="#fff"/><path d="M0.9 3.8H10.5L9.9 11.6Q9.8 12.4 9 12.4H2.4Q1.6 12.4 1.5 11.6Z" fill="#fff"/></svg>
<div class="t" style="left:98.00px;top:355.52px;font-size:11.2px;color:#4a4d50;transform:scaleX(0.93);transform-origin:0 0">39</div>
<div class="t" style="left:265.80px;top:355.52px;font-size:11.2px;color:#4a4d50;transform:scaleX(0.87);transform-origin:0 0">ROJAS</div>
<div class="t" style="left:433.80px;top:355.52px;font-size:11.2px;color:#4a4d50;transform:scaleX(0.93);transform-origin:0 0">1</div>
<div class="t" style="left:601.50px;top:355.52px;font-size:11.2px;color:#4a4d50;transform:scaleX(0.87);transform-origin:0 0">ROJAS</div>
</div>
<div id="scroll" class="a"></div>
<div class="a" style="left:1013px;top:90px;width:9px;height:307px;background:#c1c1c1"></div>
<svg style="left:1015px;top:81px" width="7" height="4" viewBox="0 0 7 4"><path d="M3.5 0L7 4H0Z" fill="#a3a3a3"/></svg>
<svg style="left:1015px;top:567px" width="7" height="4" viewBox="0 0 7 4"><path d="M3.5 4L7 0H0Z" fill="#505050"/></svg>
<div class="a" style="left:0;top:574px;width:1024px;height:2px;background:#1e1e1e"></div>
</body></html>
